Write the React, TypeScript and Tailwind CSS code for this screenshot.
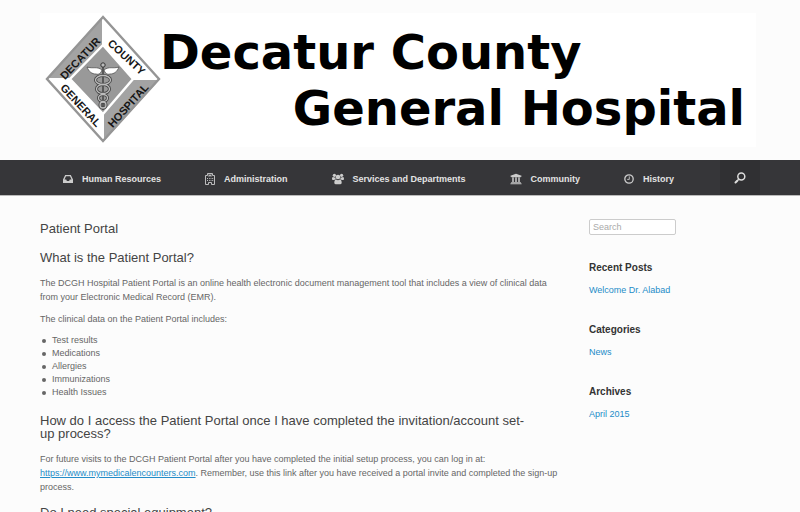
import type { ReactNode } from "react";
import { FaUniversity } from "react-icons/fa";

function Crest() {
  return (
    <svg width="134" height="134" viewBox="4 5 134 134" className="block" role="img" aria-label="Decatur County General Hospital crest">
      <path d="M67 8 10 71l57 63 57-63z" fill="#fff" />
      <path d="M67 8 10 71h24l33-34z" fill="#a3a3a3" />
      <path d="M124 71 67 134v-28l30-35z" fill="#a3a3a3" />
      <path d="M67 37 34 71l33 35 30-35z" fill="#999" stroke="#fff" strokeWidth="2.500" />
      <path d="M67 8v29M67 106v28M10 71h24M97 71h27" fill="none" stroke="#fff" strokeWidth="2" />
      <path d="M67 9 11 71l56 62 56-62z" fill="none" stroke="#959595" strokeWidth="2.400" />
      <g fontFamily="Liberation Sans, Arial, sans-serif" fontWeight="700" fontSize="11" textAnchor="middle" fill="#161616">
        <text transform="translate(47 53) rotate(-47)">DECATUR</text>
        <text transform="translate(88 52) rotate(43)">COUNTY</text>
        <text transform="translate(42 100) rotate(47)">GENERAL</text>
        <text transform="translate(95 100) rotate(-48)">HOSPITAL</text>
      </g>
      <path d="M67 59v43" stroke="#444" strokeWidth="1.500" />
      <path d="M66 62c-5-4-9-1-15-3 2 5 5 7 9 7 3 1 5-1 6-4zM68 62c5-4 9-1 15-3-2 5-5 7-9 7-3 1-5-1-6-4z" fill="#fff" stroke="#444" strokeWidth=".7" />
      <circle cx="67" cy="57" r="2.200" fill="#bbb" stroke="#333" />
      <g fill="none" stroke="#444" strokeWidth="3">
        <ellipse cx="67" cy="72" rx="7.500" ry="4.500" />
        <ellipse cx="67" cy="81" rx="6.500" ry="4.500" />
        <ellipse cx="67" cy="90" rx="4.500" ry="3.500" />
        <ellipse cx="67" cy="97" rx="3" ry="3" />
      </g>
      <g fill="none" stroke="#bdbdbd" strokeWidth="1.300">
        <ellipse cx="67" cy="72" rx="7.500" ry="4.500" />
        <ellipse cx="67" cy="81" rx="6.500" ry="4.500" />
        <ellipse cx="67" cy="90" rx="4.500" ry="3.500" />
        <ellipse cx="67" cy="97" rx="3" ry="3" />
      </g>
    </svg>
  );
}

function InboxIcon() {
  return (
    <svg width="10" height="10" viewBox="0 0 10 10" fill="currentColor" aria-hidden="true">
      <path fillRule="evenodd" d="M2.200 1h5.600L10 5.600V9H0V5.600zM3 2.300 1.500 5.600h1.700l.7 1.300h2.200l.7-1.300h1.700L7 2.300z" />
    </svg>
  );
}

function HospitalIcon() {
  return (
    <svg width="10" height="12" viewBox="0 0 10 12" fill="none" stroke="currentColor" aria-hidden="true">
      <path d="M.5 11.500v-9h2v-2h5v2h2v9h-3v-2h-3v2z" strokeWidth=".9" />
      <path d="M4 1.200v2.600M6 1.200v2.600M4 2.500h2" strokeWidth=".8" />
      <path d="M2 5.500h1M4 5.500h.8M5.600 5.500h.8M7.200 5.500h1M2 7.500h1M4 7.500h.8M5.600 7.500h.8M7.200 7.500h1" strokeWidth=".9" />
    </svg>
  );
}

function UsersIcon() {
  return (
    <svg width="12" height="12" viewBox="0 0 12 12" fill="currentColor" aria-hidden="true">
      <circle cx="2.400" cy="2.300" r="1.600" />
      <circle cx="9.600" cy="2.300" r="1.600" />
      <circle cx="6" cy="4" r="2.300" />
      <path d="M0 6.200c0-1.500.4-2.200 1-2.200.8.600 1.700.5 2.300.2 0 1 .3 1.600.7 2.100-.8 0-1.400.3-1.800.7H1C.4 7 0 6.700 0 6.200zM12 6.200c0-1.500-.4-2.200-1-2.200-.8.600-1.700.5-2.300.2 0 1-.3 1.600-.7 2.100.8 0 1.400.3 1.800.7H11c.6 0 1-.3 1-.8z" />
      <path d="M2.300 9.800c0-2 .6-3.400 1.800-3.400 1.200 1 2.600 1 3.800 0 1.200 0 1.800 1.400 1.800 3.400 0 .8-.5 1.400-1.300 1.400H3.600c-.8 0-1.300-.6-1.300-1.400z" />
    </svg>
  );
}

function ClockIcon() {
  return (
    <svg width="10" height="10" viewBox="0 0 10 10" fill="none" stroke="currentColor" aria-hidden="true">
      <circle cx="5" cy="5" r="4.200" strokeWidth="1.300" />
      <path d="M5.300 2.400v3H3.200" strokeWidth=".9" />
    </svg>
  );
}

function SearchIcon() {
  return (
    <svg width="12" height="12" viewBox="0 0 12 12" fill="none" stroke="currentColor" aria-hidden="true">
      <circle cx="7.300" cy="4.500" r="3.500" strokeWidth="1.500" />
      <path d="M4.700 7.200 3.500 8.400" strokeWidth="1.400" />
      <path d="M3.300 8.700 1.500 10.500" strokeWidth="2" strokeLinecap="round" />
    </svg>
  );
}

const navItems: { label: string; icon: ReactNode }[] = [
  { label: "Human Resources", icon: <InboxIcon /> },
  { label: "Administration", icon: <HospitalIcon /> },
  { label: "Services and Departments", icon: <UsersIcon /> },
  { label: "Community", icon: <FaUniversity size={12} /> },
  { label: "History", icon: <ClockIcon /> },
];

const clinicalData = ["Test results", "Medications", "Allergies", "Immunizations", "Health Issues"];

const widgets = [
  { title: "Recent Posts", link: "Welcome Dr. Alabad" },
  { title: "Categories", link: "News" },
  { title: "Archives", link: "April 2015" },
];

function Heading({ children }: { children: ReactNode }) {
  return <h2 className="mb-3 text-[13px] leading-[13px] text-[#444]">{children}</h2>;
}

export default function App() {
  return (
    <div className="min-h-screen bg-[#fcfcfc] font-['Liberation_Sans',Arial,sans-serif] text-[9px] leading-[14px] text-[#666]">
      <header className="px-10 py-[13px]">
        <div className="mr-1 flex bg-white">
          <Crest />
          <h1 className="-ml-[14px] flex flex-1 flex-col pt-[11px] font-['DejaVu_Sans',sans-serif] text-[48px] leading-[56px] font-bold whitespace-nowrap text-black">
            <span>Decatur County</span>
            <span className="self-end pr-[11px]">General Hospital</span>
          </h1>
        </div>
      </header>

      <nav className="flex h-9 border-b border-[#bbb] bg-[#363639] px-10 font-bold text-[#e3e3e3]">
        <ul className="flex flex-1 pt-0.5 pl-px">
          {navItems.map((item) => (
            <li key={item.label} className="flex">
              <a href="#" className="flex items-center gap-[9px] px-[22px] whitespace-nowrap">
                <span className="text-[#ccc]">{item.icon}</span>
                {item.label}
              </a>
            </li>
          ))}
        </ul>
        <button type="button" aria-label="Search" className="flex w-10 items-center justify-center bg-[#303033] text-[#ddd]">
          <SearchIcon />
        </button>
      </nav>

      <div className="flex gap-7 px-10 pt-[26px]">
        <main className="flex-1">
          <h1 className="mb-4 text-[13px] leading-[13px] text-[#444]">Patient Portal</h1>
          <Heading>What is the Patient Portal?</Heading>
          <p className="mb-2">
            The DCGH Hospital Patient Portal is an online health electronic document management tool that includes a view of clinical data from your Electronic Medical Record (EMR).
          </p>
          <p className="mb-2">The clinical data on the Patient Portal includes:</p>
          <ul className="mb-[15px] leading-[13px]">
            {clinicalData.map((item) => (
              <li key={item} className="flex items-center gap-[6px] pl-[2px] before:size-1 before:rounded-full before:bg-[#666]">
                {item}
              </li>
            ))}
          </ul>
          <Heading>
            How do I access the Patient Portal once I have completed the invitation/account set-
            <br />
            up process?
          </Heading>
          <p className="mb-3">
            For future visits to the DCGH Patient Portal after you have completed the initial setup process, you can log in at:{" "}
            <a href="https://www.mymedicalencounters.com" className="text-[#248cc8] underline">
              https://www.mymedicalencounters.com
            </a>
            . Remember, use this link after you have received a portal invite and completed the sign-up process.
          </p>
          <Heading>Do I need special equipment?</Heading>
        </main>

        <aside className="w-[171px] leading-[13px]">
          <form role="search" className="-mt-[3px] mb-[26px]">
            <input type="search" aria-label="Search" placeholder="Search" className="block h-4 w-[87px] rounded-xs border border-[#ccc] bg-white px-[3px] placeholder:text-[#aaa]" />
          </form>
          {widgets.map((widget) => (
            <section key={widget.title} className="mb-[26px]">
              <h3 className="mb-[10px] text-[10px] font-bold text-[#333]">{widget.title}</h3>
              <a href="#" className="block text-[#248cc8]">{widget.link}</a>
            </section>
          ))}
        </aside>
      </div>
    </div>
  );
}
